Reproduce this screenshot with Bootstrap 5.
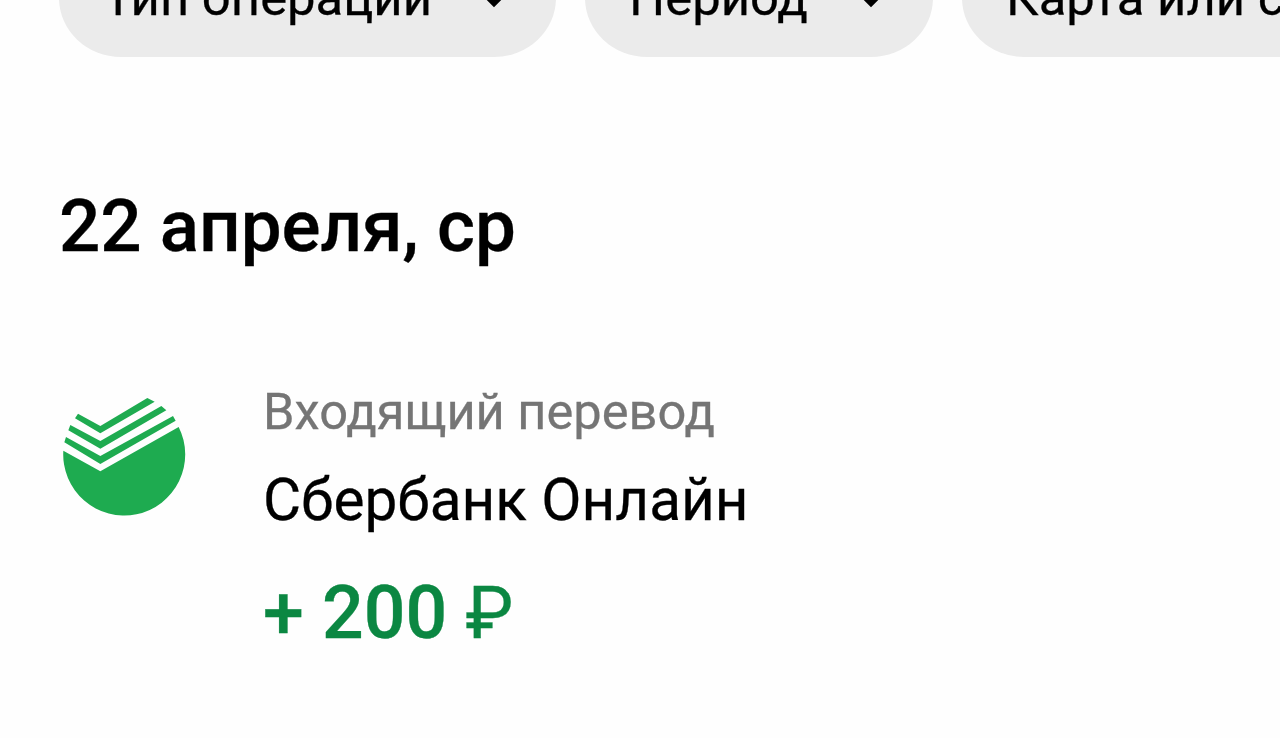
<!DOCTYPE html>
<html lang="ru">
<head>
  <meta charset="UTF-8">
  <meta name="viewport" content="width=device-width, initial-scale=1">
  <title>История операций</title>
  <link href="https://cdn.jsdelivr.net/npm/bootstrap@5.3.3/dist/css/bootstrap.min.css" rel="stylesheet">
  <style>
    body {
      background-color: #fefefe;
      color: #000;
      font-family: Roboto, "Noto Sans", sans-serif;
      -webkit-text-stroke-width: .3px;
    }
    .screen {
      height: 738px;
      padding-left: 59px;
    }
    /* filters are scrolled half way under the top edge */
    .filters {
      margin-top: -61px;
      gap: 29px;
    }
    .filter-chip {
      height: 118px;
      padding: 0 44px;
      border-radius: 62px / 59px;
      background-color: #ebebeb;
      font-size: 50.8px;
      line-height: 118px;
    }
    .chip-type { width: 497px; }
    .chip-period { width: 348px; }
    .chip-card { width: 540px; }
    .day-title {
      margin: 126px 0 0;
      font-size: 72.8px;
      line-height: 86px;
    }
    .operation {
      margin-top: 116px;
    }
    .bank-logo {
      width: 150px;
      height: 140px;
      margin: 0 63px 0 -9px;
    }
    .op-text {
      margin-top: -3px;
    }
    .op-type {
      font-size: 50.6px;
      line-height: 60px;
      color: #757575;
    }
    .op-name {
      margin-top: 25px;
      font-size: 58.5px;
      line-height: 66px;
    }
    .op-amount {
      margin-top: 37px;
      font-size: 73.4px;
      line-height: 86px;
      color: #0b8742;
    }
    .op-currency {
      font-size: 72px;
      line-height: 1;
    }
  </style>
</head>
<body>
  <div class="screen overflow-hidden">

    <!-- Фильтры -->
    <div class="filters d-flex flex-nowrap">
      <div class="filter-chip chip-type d-flex flex-shrink-0 justify-content-between align-items-center text-nowrap">
        <span>Тип операции</span>
        <svg width="36" height="24" viewBox="0 0 36 24"><path d="M5 4L18 17L31 4" fill="none" stroke="#000" stroke-width="6"/></svg>
      </div>
      <div class="filter-chip chip-period d-flex flex-shrink-0 justify-content-between align-items-center text-nowrap">
        <span>Период</span>
        <svg width="36" height="24" viewBox="0 0 36 24"><path d="M5 4L18 17L31 4" fill="none" stroke="#000" stroke-width="6"/></svg>
      </div>
      <div class="filter-chip chip-card d-flex flex-shrink-0 justify-content-between align-items-center text-nowrap">
        <span>Карта или счёт</span>
      </div>
    </div>

    <!-- Операции за день -->
    <h2 class="day-title fw-medium">22 апреля, ср</h2>

    <div class="operation d-flex align-items-start">
      <svg class="bank-logo flex-shrink-0" viewBox="0 0 450 420" fill="#1eab50">
        <path d="M84 86L151 123L292 39L314 50L151 145L75 100Z"/>
        <path d="M61 120L151 168L334 63L349 76L151 191L55 136Z"/>
        <path d="M48 156L151 213L369 93L377 107L151 237L43 172Z"/>
        <path d="M40 197L151 259L386 126A183 183 0 1 1 40 197Z"/>
      </svg>
      <div class="op-text">
        <div class="op-type">Входящий перевод</div>
        <div class="op-name">Сбербанк Онлайн</div>
        <div class="op-amount fw-medium">+ 200 <span class="op-currency fw-normal">₽</span></div>
      </div>
    </div>

  </div>
  <script src="https://cdn.jsdelivr.net/npm/bootstrap@5.3.3/dist/js/bootstrap.bundle.min.js"></script>
</body>
</html>
